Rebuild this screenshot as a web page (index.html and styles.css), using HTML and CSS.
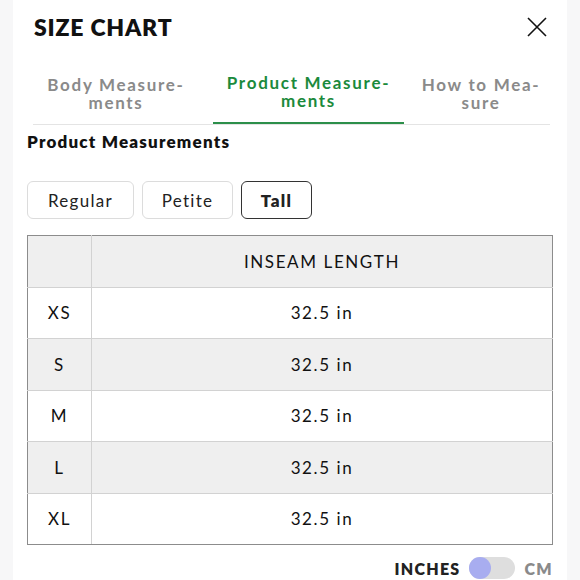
FILE: index.html
```html
<!DOCTYPE html>
<html>
<head>
<meta charset="utf-8">
<link rel="stylesheet" href="styles.css">
</head>
<body>
<div class="panel">
  <div class="header">
    <h1 class="title">SIZE CHART</h1>
    <svg class="close" width="20" height="20" viewBox="0 0 20 20"><path d="M1 1 L19 19 M19 1 L1 19" stroke="#111" stroke-width="1.6" fill="none"/></svg>
  </div>
  <div class="tabs">
    <div class="tab tab1">Body Measure-<br>ments</div>
    <div class="tab tab2 active">Product Measure-<br>ments</div>
    <div class="tab tab3">How to Mea-<br>sure</div>
  </div>
  <h2 class="section">Product Measurements</h2>
  <div class="fits">
    <div class="fit fit-regular">Regular</div>
    <div class="fit fit-petite">Petite</div>
    <div class="fit fit-tall selected">Tall</div>
  </div>
  <table class="chart">
    <tr class="head"><th class="size"></th><th>INSEAM LENGTH</th></tr>
    <tr><td class="size">XS</td><td>32.5 in</td></tr>
    <tr class="alt"><td class="size">S</td><td>32.5 in</td></tr>
    <tr><td class="size">M</td><td>32.5 in</td></tr>
    <tr class="alt"><td class="size">L</td><td>32.5 in</td></tr>
    <tr><td class="size">XL</td><td>32.5 in</td></tr>
  </table>
  <div class="units">
    <span class="unit on">INCHES</span>
    <span class="switch"><span class="knob"></span></span>
    <span class="unit off">CM</span>
  </div>
</div>
</body>
</html>
```

FILE: styles.css
```css
html, body {
  margin: 0;
  padding: 0;
  background: #f7f7f8;
  font-family: Lato, "Open Sans", sans-serif;
  color: #111;
}
.panel {
  margin: 0 13px;
  background: #fff;
  height: 580px;
  padding: 0 14px;
  overflow: hidden;
}
.header {
  display: flex;
  justify-content: space-between;
  align-items: center;
  padding: 13px 6px 0 7px;
}
.title {
  margin: 0;
  font-size: 23px;
  line-height: 28px;
  font-weight: 800;
  letter-spacing: 0.8px;
}
.close {
  display: block;
}
.tabs {
  display: grid;
  grid-template-columns: 180px 191px 146px;
  margin: 32px 3px 0 6px;
  border-bottom: 1.5px solid #e4e4e4;
}
.tab {
  text-align: center;
  font-size: 17px;
  line-height: 18px;
  font-weight: 700;
  letter-spacing: 1.7px;
  color: #8a8a8a;
  padding: 3px 0 12px;
}
.tab1 { padding-right: 14px; }
.tab3 { padding-left: 8px; }
.tab.active {
  color: #1b8a3c;
  padding-top: 1px;
  padding-bottom: 12px;
  border-bottom: 2px solid #2c8f4a;
}
.section {
  margin: 7px 0 0;
  font-size: 17px;
  line-height: 20px;
  font-weight: 800;
  letter-spacing: 1.2px;
}
.fits {
  display: flex;
  gap: 8px;
  margin-top: 29px;
}
.fit {
  height: 38px;
  box-sizing: border-box;
  border: 1px solid #dcdcdc;
  border-radius: 6px;
  display: flex;
  align-items: center;
  justify-content: center;
  font-size: 17px;
  letter-spacing: 1.3px;
  color: #222;
}
.fit-regular { width: 107px; }
.fit-petite { width: 91px; }
.fit-tall { width: 71px; }
.fit.selected {
  border: 1.5px solid #333;
  font-weight: 800;
}
.chart {
  margin-top: 16px;
  width: 526px;
  border-collapse: collapse;
  border: 1.5px solid #8c8c8c;
}
.chart th, .chart td {
  height: 50.5px;
  padding: 0;
  text-align: center;
  border: 1px solid #d2d2d2;
  font-size: 17px;
  font-weight: 400;
  letter-spacing: 1.6px;
  color: #111;
}
.chart .size { width: 63px; }
.chart tr:first-child th { border-top: 1.5px solid #8c8c8c; }
.chart tr:last-child td { border-bottom: 1.5px solid #8c8c8c; }
.chart tr th:first-child, .chart tr td:first-child { border-left: 1.5px solid #8c8c8c; }
.chart tr th:last-child, .chart tr td:last-child { border-right: 1.5px solid #8c8c8c; }
.head, .alt { background: #efefef; }
.units {
  display: flex;
  justify-content: flex-end;
  align-items: center;
  gap: 8px;
  margin-top: 11px;
  height: 24px;
}
.unit {
  font-size: 16px;
  font-weight: 800;
  letter-spacing: 1.3px;
}
.unit.on { color: #222; }
.unit.off { color: #8a8a8a; margin-left: 2px; }
.switch {
  position: relative;
  width: 46px;
  height: 22px;
  border-radius: 11px;
  background: #dedede;
}
.knob {
  position: absolute;
  left: 0;
  top: 0;
  width: 22px;
  height: 22px;
  border-radius: 50%;
  background: #a8adf0;
}
```
